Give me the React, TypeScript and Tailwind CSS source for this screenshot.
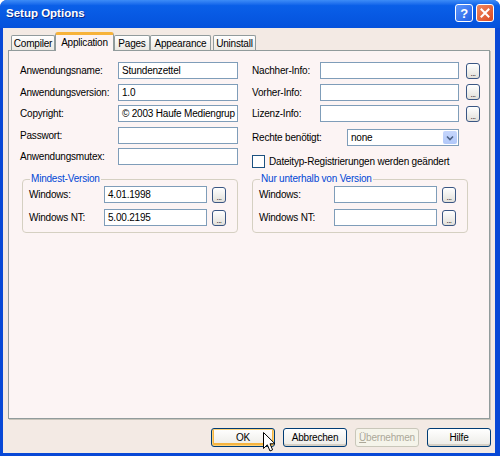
import React from 'react';

function Field({ value = '', w }: { value?: string; w: string }) {
    return (
        <div className={`h-[17px] ${w} shrink-0 border border-[#7f9db9] bg-white px-[3px] leading-[15px] overflow-hidden whitespace-nowrap`}>
            {value}
        </div>
    );
}

function Dots() {
    return (
        <div className="w-[14px] h-[16px] shrink-0 rounded-[3px] border border-[#3a5683] bg-linear-to-b from-white to-[#e2e0da] flex items-end justify-center text-[8px] leading-[9px] tracking-[-0.5px]">
            ...
        </div>
    );
}

function Tab({ label, active, w }: { label: string; active?: boolean; w: string }) {
    if (active) {
        return (
            <div className={`${w} h-[19px] -mb-px z-10 rounded-t-[3px] border-x border-[#919b9c] border-t-[3px] border-t-[#f7b33a] bg-[#fcf4f4] flex items-center justify-center pb-[1px]`}>
                {label}
            </div>
        );
    }
    return (
        <div className={`${w} h-[15px] rounded-t-[2px] border border-b-0 border-[#919b9c] bg-linear-to-b from-white to-[#ebe8e2] flex items-center justify-center`}>
            {label}
        </div>
    );
}

function Btn({ label, kind }: { label: React.ReactNode; kind?: 'default' | 'disabled' }) {
    if (kind === 'disabled') {
        return (
            <div className="w-[64px] h-[19px] rounded-[3px] border border-[#c9c7ba] bg-[#f5f4ea] text-[#aca899] flex items-center justify-center">
                {label}
            </div>
        );
    }
    return (
        <div
            className={`w-[64px] h-[19px] rounded-[3px] border border-[#003c74] bg-linear-to-b from-white to-[#ecebe6] flex items-center justify-center ${
                kind === 'default' ? 'shadow-[inset_0_0_0_1px_#fbd27b,inset_0_-1px_0_2px_#f6b440]' : 'shadow-[inset_0_-2px_0_#d6d0c5]'
            }`}
        >
            {label}
        </div>
    );
}

// group box with the two windows version rows
function VersionBox({ title, win = '', nt = '' }: { title: string; win?: string; nt?: string }) {
    return (
        <fieldset className="w-[216px] h-[60px] rounded-[4px] border border-[#d5d0c2] pl-[6px]">
            <legend className="ml-[1px] px-[1px] text-[#0046d5] leading-[12px]">{title}</legend>
            <div className="flex flex-col gap-[6px] pt-[1px]">
                <div className="flex items-center">
                    <span className="w-[75px]">Windows:</span>
                    <Field value={win} w="w-[103px]" />
                    <div className="ml-[5px]"><Dots /></div>
                </div>
                <div className="flex items-center">
                    <span className="w-[75px]">Windows NT:</span>
                    <Field value={nt} w="w-[103px]" />
                    <div className="ml-[5px]"><Dots /></div>
                </div>
            </div>
        </fieldset>
    );
}

export default function App() {
    return (
        <div className="relative w-[500px] h-[456px] flex flex-col bg-[#0848d6] font-['Liberation_Sans',Arial,sans-serif] text-[10px] tracking-[-0.2px] text-black overflow-hidden rounded-t-[7px]">
            {/* Title bar */}
            <div className="h-[28px] shrink-0 flex items-center justify-between pl-[6px] pr-[6px] bg-linear-to-b from-[#3d8cf7] via-[#0a5fe8] via-20% to-[#0552dc]">
                <span className="text-white font-bold text-[11.5px] tracking-normal [text-shadow:1px_1px_0_#0a2a8a]">Setup Options</span>
                <div className="flex gap-[3px] -mt-[2px]">
                    <div className="w-[18px] h-[18px] rounded-[3px] border border-white bg-linear-to-br from-[#5d95fb] to-[#1f5fe6] flex items-center justify-center text-white font-bold text-[13px] leading-none">
                        ?
                    </div>
                    <div className="w-[18px] h-[18px] rounded-[3px] border border-white bg-linear-to-br from-[#f08860] to-[#d9471f] flex items-center justify-center">
                        <svg width="10" height="10" viewBox="0 0 10 10">
                            <path d="M1.5 1.5 L8.5 8.5 M8.5 1.5 L1.5 8.5" stroke="white" strokeWidth="2" strokeLinecap="square" />
                        </svg>
                    </div>
                </div>
            </div>

            {/* Body */}
            <div className="flex-1 flex flex-col ml-[3px] mr-[5px] mb-[3px] bg-[#f3eae4] px-[5px] pt-[4px] pb-[6px]">
                {/* Tabs */}
                <div className="h-[18px] flex items-end pl-[3px]">
                    <Tab label="Compiler" w="w-[44px]" />
                    <Tab label="Application" w="w-[59px]" active />
                    <Tab label="Pages" w="w-[36px]" />
                    <Tab label="Appearance" w="w-[61px]" />
                    <div className="ml-[2px]">
                        <Tab label="Uninstall" w="w-[43px]" />
                    </div>
                </div>

                {/* Panel */}
                <div className="h-[369px] shrink-0 border border-[#919b9c] bg-[#fcf4f4] shadow-[1px_1px_0_#c8c4ba] pl-[11px] pt-[11px]">
                    <div className="flex">
                        {/* Left column */}
                        <div className="w-[218px] flex flex-col gap-[4.5px]">
                            {[
                                ['Anwendungsname:', 'Stundenzettel'],
                                ['Anwendungsversion:', '1.0'],
                                ['Copyright:', '© 2003 Haufe Mediengrup'],
                                ['Passwort:', ''],
                                ['Anwendungsmutex:', ''],
                            ].map(([label, value]) => (
                                <div key={label} className="flex items-center">
                                    <span className="w-[98px]">{label}</span>
                                    <Field value={value} w="w-[120px]" />
                                </div>
                            ))}
                        </div>

                        {/* Right column */}
                        <div className="ml-[14px] flex flex-col">
                            <div className="flex flex-col gap-[4.5px]">
                                {['Nachher-Info:', 'Vorher-Info:', 'Lizenz-Info:'].map(label => (
                                    <div key={label} className="flex items-center">
                                        <span className="w-[68px]">{label}</span>
                                        <Field w="w-[139px]" />
                                        <div className="ml-[7px]"><Dots /></div>
                                    </div>
                                ))}
                            </div>
                            <div className="flex items-center mt-[7px]">
                                <span className="w-[95px]">Rechte benötigt:</span>
                                <div className="w-[112px] h-[17px] border border-[#7f9db9] bg-white flex items-center">
                                    <span className="flex-1 pl-[3px]">none</span>
                                    <div className="w-[14px] h-[13px] mr-px rounded-[2px] bg-linear-to-b from-[#c6d6fc] to-[#b1c8f9] flex items-center justify-center">
                                        <svg width="8" height="6" viewBox="0 0 8 6">
                                            <path d="M1 1.5 L4 4.5 L7 1.5" stroke="#4d6185" strokeWidth="1.6" fill="none" />
                                        </svg>
                                    </div>
                                </div>
                            </div>
                            <label className="flex items-center mt-[8px]">
                                <span className="w-[13px] h-[13px] border border-[#1c5180] bg-white" />
                                <span className="ml-[4px]">Dateityp-Registrierungen werden geändert</span>
                            </label>
                        </div>
                    </div>

                    {/* Version groups */}
                    <div className="flex mt-[4px] ml-[2px] gap-[14px]">
                        <VersionBox title="Mindest-Version" win="4.01.1998" nt="5.00.2195" />
                        <VersionBox title="Nur unterhalb von Version" />
                    </div>
                </div>

                {/* Buttons */}
                <div className="mt-[9px] flex justify-end gap-[8px] -mr-px">
                    <Btn label="OK" kind="default" />
                    <Btn label="Abbrechen" />
                    <Btn label={<span><span className="underline">Ü</span>bernehmen</span>} kind="disabled" />
                    <Btn label="Hilfe" />
                </div>
            </div>

            {/* Mouse cursor */}
            <svg className="absolute left-[263px] top-[432px]" width="13" height="21" viewBox="0 0 13 21">
                <path d="M0.5 0.5 L0.5 16.5 L4.3 12.8 L7 19 L9.6 17.8 L7 11.8 L12 11.8 Z" fill="white" stroke="black" strokeWidth="1" strokeLinejoin="miter" />
            </svg>
        </div>
    );
}
